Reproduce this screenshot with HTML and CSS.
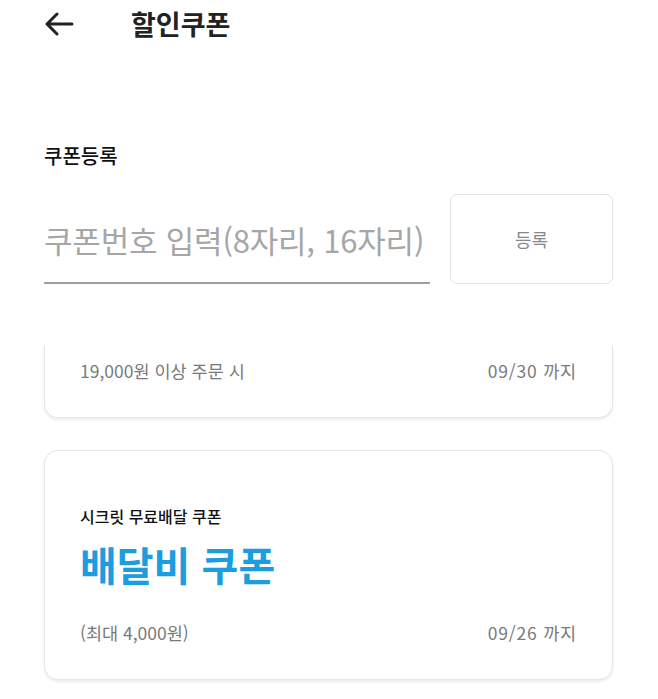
FILE: index.html
```html
<!DOCTYPE html>
<html lang="ko">
<head>
<meta charset="utf-8">
<title>할인쿠폰</title>
<link rel="stylesheet" href="styles.css">
</head>
<body>
<div class="page">
  <header class="header">
    <svg class="back" width="30" height="24" viewBox="0 0 30 24" aria-hidden="true">
      <path d="M28 12H3 M13 2L3 12L13 22" fill="none" stroke="#222" stroke-width="3" stroke-linecap="round" stroke-linejoin="round"/>
    </svg>
    <h1 class="title">할인쿠폰</h1>
  </header>

  <section class="register">
    <h2 class="label">쿠폰등록</h2>
    <div class="row">
      <div class="input">쿠폰번호 입력(8자리, 16자리)</div>
      <button class="btn">등록</button>
    </div>
  </section>

  <div class="list">
    <div class="card card-cut">
      <div class="meta">
        <span>19,000원 이상 주문 시</span>
        <span class="date">09/30 까지</span>
      </div>
    </div>
    <div class="card">
      <div class="sub">시크릿 무료배달 쿠폰</div>
      <div class="big">배달비 쿠폰</div>
      <div class="meta">
        <span>(최대 4,000원)</span>
        <span class="date">09/26 까지</span>
      </div>
    </div>
  </div>
</div>
</body>
</html>
```

FILE: styles.css
```css
html, body {
  margin: 0;
  padding: 0;
  background: #fff;
}
body {
  font-family: "Noto Sans CJK KR", "Noto Sans", sans-serif;
  color: #222;
}
.page {
  padding: 0 45px 0 44px;
  height: 699px;
  overflow: hidden;
  box-sizing: border-box;
}
.header {
  display: flex;
  align-items: center;
  height: 48px;
  gap: 57px;
}
.back {
  display: block;
  flex: none;
}
.title {
  margin: 0;
  font-size: 27px;
  font-weight: 700;
  line-height: 48px;
  color: #222;
}
.register {
  padding-top: 94px;
}
.label {
  margin: 0;
  font-size: 20px;
  font-weight: 500;
  line-height: 28px;
  color: #111;
}
.row {
  display: flex;
  gap: 20px;
  margin-top: 24px;
  height: 90px;
}
.input {
  flex: 1;
  border-bottom: 2px solid #9aa1a1;
  font-size: 31px;
  font-weight: 400;
  color: #a6a6a6;
  display: flex;
  align-items: center;
  padding-top: 2px;
  letter-spacing: -0.2px;
  box-sizing: border-box;
  white-space: nowrap;
  overflow: hidden;
}
.btn {
  flex: none;
  width: 163px;
  border: 1.5px solid #e4e4e4;
  border-radius: 7px;
  background: #fff;
  font-family: inherit;
  font-size: 18px;
  color: #888;
  padding: 0;
}
.list {
  margin-top: 61px;
  display: flex;
  flex-direction: column;
  gap: 32px;
}
.card {
  border: 1.5px solid #e5e6e8;
  border-radius: 14px;
  box-shadow: 0 2px 3px rgba(0, 0, 0, 0.07);
  padding: 53px 35px 34px 35px;
  background: #fff;
}
.card-cut {
  border-top: none;
  border-top-left-radius: 0;
  border-top-right-radius: 0;
  padding-top: 14px;
}
.meta {
  display: flex;
  justify-content: space-between;
  font-size: 17.5px;
  line-height: 24px;
  color: #7a7a7a;
}
.date {
  letter-spacing: 0.8px;
}
.sub {
  font-size: 16px;
  font-weight: 500;
  line-height: 24px;
  color: #111;
}
.big {
  font-size: 40px;
  font-weight: 700;
  line-height: 50px;
  color: #1c9de0;
  margin-top: 11px;
  margin-bottom: 32px;
}
```
